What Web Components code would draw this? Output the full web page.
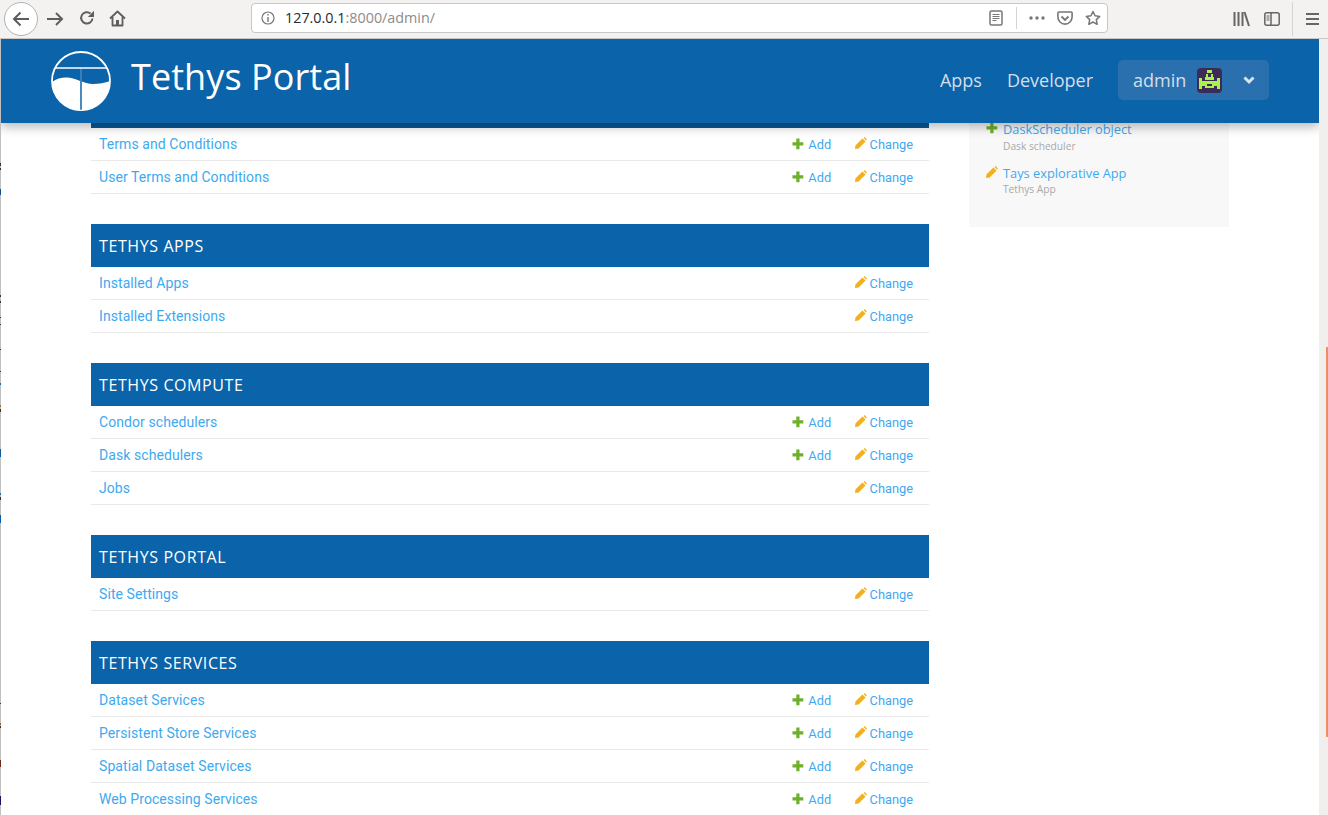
<!DOCTYPE html>
<html>
<head>
<meta charset="utf-8">
<title>Tethys Portal</title>
<style>
  html, body { margin: 0; height: 100%; background: #fff; overflow: hidden; }
  body { display: flex; flex-direction: column; width: 1328px; height: 815px; font-family: "Open Sans", sans-serif; }
</style>
</head>
<body>
<browser-bar></browser-bar>
<page-frame>
  <portal-header slot="header"></portal-header>
  <admin-section clipped>
    <admin-row add change>Terms and Conditions</admin-row>
    <admin-row add change>User Terms and Conditions</admin-row>
  </admin-section>
  <admin-section title="Tethys Apps">
    <admin-row change>Installed Apps</admin-row>
    <admin-row change>Installed Extensions</admin-row>
  </admin-section>
  <admin-section title="Tethys Compute">
    <admin-row add change>Condor schedulers</admin-row>
    <admin-row add change>Dask schedulers</admin-row>
    <admin-row change>Jobs</admin-row>
  </admin-section>
  <admin-section title="Tethys Portal">
    <admin-row change>Site Settings</admin-row>
  </admin-section>
  <admin-section title="Tethys Services">
    <admin-row add change>Dataset Services</admin-row>
    <admin-row add change>Persistent Store Services</admin-row>
    <admin-row add change>Spatial Dataset Services</admin-row>
    <admin-row add change>Web Processing Services</admin-row>
  </admin-section>
  <recent-actions slot="side">
    <recent-item kind="add" type="Dask scheduler">DaskScheduler object</recent-item>
    <recent-item kind="change" type="Tethys App">Tays explorative App</recent-item>
  </recent-actions>
</page-frame>

<script>
const ICONS = {
  plus: `<svg class="plus" width="12" height="12" viewBox="0 0 12 12"><path fill="#6fb02a" d="M4.300 .5h3.200v3.800h3.800v3.200H7.500v3.800H4.300V7.500H.5V4.300h3.800z"/></svg>`,
  pencil: `<svg class="pencil" width="12" height="12" viewBox="0 0 12 12"><path fill="#f2b01e" d="M9.600 0L12 2.400l-1 1-2.400-2.400zM7.400 1.400l3.200 3.200-7 7L0 12l.4-3.600z"/></svg>`
};

class BrowserBar extends HTMLElement {
  connectedCallback() {
    this.attachShadow({ mode: 'open' }).innerHTML = `
      <style>
        :host { display: flex; align-items: center; flex: none; height: 38px; background: #f3f2f0; border-bottom: 1px solid #c9c8c6; box-sizing: content-box; position: relative; }
        svg { display: block; flex: none; }
        .back { width: 32px; height: 32px; margin-left: 4px; border: 1px solid #b4b3b1; border-radius: 50%; background: #fff; display: flex; align-items: center; justify-content: center; }
        .url { margin-left: 125px; width: 855px; height: 28px; background: #fff; border: 1px solid #c8c7c5; border-radius: 4px; display: flex; align-items: center; position: relative; top: -1px; }
        .addr { margin-left: 10px; font: 14.350px/1 "Open Sans", sans-serif; color: #8c8c8c; flex: 1; }
        .addr b { font-weight: 400; color: #2a2a2a; }
        .sep { width: 1px; height: 22px; background: #d5d4d2; }
      </style>
      <div class="back"><svg width="20" height="18" viewBox="0 0 20 18"><path fill="none" stroke="#5c5c5c" stroke-width="2" d="M18 9H3M9.500 2.500L3 9l6.500 6.500"/></svg></div>
      <svg style="margin-left:8px;margin-top:-1px" width="18" height="16" viewBox="0 0 18 16"><path fill="none" stroke="#5e5e5e" stroke-width="2" d="M1 8h15M10 2l6 6-6 6"/></svg>
      <svg style="margin-left:15px;margin-top:-2px" width="16" height="16" viewBox="0 0 16 16"><path fill="none" stroke="#5e5e5e" stroke-width="2" d="M13.500 8.500A5.700 5.700 0 1 1 11.500 3.500"/><path fill="#5e5e5e" d="M15 .8v6.200H8.800z"/></svg>
      <svg style="margin-left:14px;margin-top:-2px" width="17" height="17" viewBox="0 0 17 17"><path fill="none" stroke="#5e5e5e" stroke-width="1.800" stroke-linejoin="round" d="M1 8.500L8.500 1.500 16 8.500M3.500 7v8.500h10V7"/><path fill="#5e5e5e" d="M7 10h3v5.500H7z"/></svg>
      <div class="url">
        <svg style="margin-left:9px" width="14" height="14" viewBox="0 0 14 14"><circle cx="7" cy="7" r="6" fill="none" stroke="#777" stroke-width="1.200"/><path fill="#777" d="M6.300 3h1.400v1.400H6.300zM6.300 6h1.400v5H6.300z"/></svg>
        <div class="addr"><b>127.0.0.1</b>:8000/admin/</div>
        <svg width="14" height="16" viewBox="0 0 14 16"><rect x="1" y="1" width="12" height="14" rx="1.500" fill="none" stroke="#777" stroke-width="1.500"/><path stroke="#777" stroke-width="1" d="M3.500 4.500h7M3.500 6.500h7M3.500 8.500h7M3.500 10.500h4"/></svg>
        <div class="sep" style="margin-left:13px"></div>
        <svg style="margin-left:12px" width="16" height="4" viewBox="0 0 16 4"><circle cx="2" cy="2" r="1.700" fill="#777"/><circle cx="8" cy="2" r="1.700" fill="#777"/><circle cx="14" cy="2" r="1.700" fill="#777"/></svg>
        <svg style="margin-left:12px" width="16" height="15" viewBox="0 0 16 15"><path fill="none" stroke="#777" stroke-width="1.600" d="M1.800 1h12.400c.5 0 .9.400.9.900V6A7 7 0 0 1 .9 6V1.900c0-.5.400-.9.900-.9z"/><path fill="none" stroke="#777" stroke-width="1.800" d="M4.500 5.500L8 9l3.500-3.500"/></svg>
        <svg style="margin:0 6px 0 12px" width="16" height="16" viewBox="0 0 16 16"><path fill="none" stroke="#777" stroke-width="1.500" stroke-linejoin="round" d="M8 1.500l2 4.300 4.700.6-3.400 3.200.9 4.700L8 12l-4.200 2.300.9-4.700L1.300 6.400 6 5.800z"/></svg>
      </div>
      <svg style="margin-left:125px" width="17" height="16" viewBox="0 0 17 16"><path stroke="#666" stroke-width="2" fill="none" d="M1.500 1v14M5.500 1v14M9.500 1v14M11.500 1l4.500 14"/></svg>
      <svg style="margin-left:14px" width="16" height="14" viewBox="0 0 16 14"><rect x=".8" y=".8" width="14.400" height="12.400" rx="2" fill="none" stroke="#666" stroke-width="1.500"/><path fill="none" stroke="#666" stroke-width="1.500" d="M7 1v12"/><path stroke="#666" d="M2.500 4h3M2.500 6h3M2.500 8h3"/></svg>
      <div class="sep" style="margin-left:12px;height:34px"></div>
      <svg style="margin-left:13px" width="13" height="12" viewBox="0 0 13 12"><path stroke="#666" stroke-width="2" d="M0 1h13M0 6h13M0 11h13"/></svg>
    `;
  }
}

// bits of the desktop that show through the 1px gap left of the window (page y, colour)
const EDGE_MARKS = [[163,166,'#333'],[168,170,'#333'],[189,195,'#12518c'],[295,297,'#333'],[301,303,'#333'],[317,318,'#333'],
  [324,325,'#333'],[349,350,'#333'],[371,372,'#333'],[383,385,'#1a6fb0'],[405,407,'#a5702a'],[409,412,'#333'],[449,457,'#0b5aa5'],
  [493,495,'#1a6fb0'],[497,500,'#333'],[515,523,'#0b5aa5'],[703,704,'#333'],[723,725,'#a5602a'],[726,728,'#333'],[760,767,'#6b2a1a'],[796,805,'#1a1060']];

class PageFrame extends HTMLElement {
  connectedCallback() {
    let y = 0;
    const stops = [];
    for (const [a, b, c] of EDGE_MARKS) {
      const top = a - 39, bot = b - 39;
      stops.push(`#c0c0c0 ${y}px ${top}px`, `${c} ${top}px ${bot}px`);
      y = bot;
    }
    stops.push(`#c0c0c0 ${y}px`);
    this.attachShadow({ mode: 'open' }).innerHTML = `
      <style>
        :host { display: flex; flex: 1; min-height: 0; }
        .edge { flex: none; width: 1px; background: linear-gradient(${stops.join(',')}); }
        .view { flex: none; width: 1318px; display: flex; flex-direction: column; overflow: hidden; }
        .body { display: flex; gap: 40px; padding-left: 90px; }
        .main { flex: none; width: 838px; }
        .side { flex: none; width: 260px; }
        .bar { flex: none; width: 9px; background: #f0efee; display: flex; justify-content: flex-end; }
        .thumb { width: 2px; height: 390px; margin-top: 308px; background: #f08c62; }
      </style>
      <div class="edge"></div>
      <div class="view">
        <slot name="header"></slot>
        <div class="body">
          <div class="main"><slot></slot></div>
          <div class="side"><slot name="side"></slot></div>
        </div>
      </div>
      <div class="bar"><div class="thumb"></div></div>
    `;
  }
}

class PortalHeader extends HTMLElement {
  connectedCallback() {
    // invader avatar, x y w h on a 25px box
    const px = [[10,2,5,3],[9,6,2,3],[14,6,2,3],[8,9,9,3],[2,10,3,11],[20,10,3,11],[5,13,15,3],[5,16,5,2],[15,16,5,2],[8,18,9,2]]
      .map(([x, y, w, h]) => `<rect x="${x}" y="${y}" width="${w}" height="${h}"/>`).join('');
    this.attachShadow({ mode: 'open' }).innerHTML = `
      <style>
        :host { display: flex; align-items: center; flex: none; height: 84px; background: #0b63a9; padding: 0 50px; position: relative; z-index: 2; box-shadow: 0 4px 10px rgba(0,0,0,.28); }
        .brand { display: flex; align-items: center; gap: 20px; flex: 1; }
        svg { display: block; }
        .title { font-size: 36px; line-height: 1; color: #fff; margin-top: -8px; letter-spacing: .08px; }
        .nav { font-size: 18px; color: #d4dfe9; margin-top: -2px; }
        .nav + .nav { margin-left: 25px; }
        .user { display: flex; align-items: center; width: 151px; height: 40px; margin: -2px 0 0 25px; box-sizing: border-box; padding-left: 15px; background: #2a70ae; border-radius: 5px; color: #d4dfe9; font-size: 18px; }
        .user svg.av { margin-left: 11px; border-radius: 4px; }
        .user svg.ch { margin-left: 21px; }
      </style>
      <div class="brand">
        <svg width="60" height="60" viewBox="0 0 60 60">
          <circle cx="30" cy="30" r="29" fill="none" stroke="#fff" stroke-width="1.800"/>
          <path fill="#fff" d="M1 31C6 27 12 26 17 26.500C25 27 33 33 42 33C48 33 54 32 59 30A29 29 0 0 1 1 31z"/>
          <path stroke="#fff" stroke-width="1.500" d="M4 17h52M30 17v14"/>
          <path stroke="#0b63a9" stroke-width="1.500" d="M30 17.800v41"/>
        </svg>
        <div class="title">Tethys Portal</div>
      </div>
      <div class="nav">Apps</div>
      <div class="nav">Developer</div>
      <div class="user">admin
        <svg class="av" width="25" height="25" viewBox="0 0 25 25" shape-rendering="crispEdges"><rect width="25" height="25" fill="#3c2a58"/><g fill="#a8f24a">${px}</g></svg>
        <svg class="ch" width="12" height="9" viewBox="0 0 12 9"><path fill="none" stroke="#d8e4ee" stroke-width="3" d="M1.500 1.500L6 6l4.500-4.500"/></svg>
      </div>
    `;
  }
}

class AdminSection extends HTMLElement {
  connectedCallback() {
    const clipped = this.hasAttribute('clipped');
    this.attachShadow({ mode: 'open' }).innerHTML = `
      <style>
        :host { display: block; margin-bottom: 30px; }
        .cap { height: 43px; box-sizing: border-box; padding-left: 8px; background: #0b63a9; color: #fff; font-size: 16px; line-height: 44px; letter-spacing: .6px; text-transform: uppercase; }
        .stub { height: 5px; background: #0a5a98; }
      </style>
      ${clipped ? '<div class="stub"></div>' : `<div class="cap">${this.getAttribute('title')}</div>`}
      <slot></slot>
    `;
  }
}

class AdminRow extends HTMLElement {
  connectedCallback() {
    const add = this.hasAttribute('add');
    const change = this.hasAttribute('change');
    this.attachShadow({ mode: 'open' }).innerHTML = `
      <style>
        :host { display: flex; align-items: center; height: 33px; box-sizing: border-box; border-bottom: 1px solid #eaeaea; padding: 0 16px 0 8px; font: 14px/1 Roboto, sans-serif; color: #3ea9f0; }
        .name { flex: 1; letter-spacing: .08px; }
        .act { display: flex; align-items: center; gap: 3px; padding-top: 2px; font: 12.800px/1 Roboto, sans-serif; }
        .act svg { display: block; margin-top: -3px; }
        .add { gap: 4px; margin-right: 23.500px; }
        .add svg { margin-top: -1px; }
      </style>
      <div class="name"><slot></slot></div>
      ${add ? `<div class="act add">${ICONS.plus}<span>Add</span></div>` : ''}
      ${change ? `<div class="act">${ICONS.pencil}<span>Change</span></div>` : ''}
    `;
  }
}

class RecentActions extends HTMLElement {
  connectedCallback() {
    this.attachShadow({ mode: 'open' }).innerHTML = `
      <style>
        :host { display: block; height: 104px; box-sizing: border-box; background: #f8f8f8; padding-left: 17px; }
      </style>
      <slot></slot>
    `;
  }
}

class RecentItem extends HTMLElement {
  connectedCallback() {
    const icon = this.getAttribute('kind') === 'add' ? ICONS.plus : ICONS.pencil;
    this.attachShadow({ mode: 'open' }).innerHTML = `
      <style>
        :host { display: flex; gap: 5px; height: 44px; color: #3ea9f0; font: 12.800px/1 "Open Sans", sans-serif; }
        svg { display: block; margin-top: -1px; flex: none; }
        .type { margin-top: 5px; font-size: 10.200px; color: #a8a8a8; }
        :host([kind=change]) .type { margin-top: 4px; }
      </style>
      ${icon}
      <div><slot></slot><div class="type">${this.getAttribute('type')}</div></div>
    `;
  }
}

customElements.define('browser-bar', BrowserBar);
customElements.define('page-frame', PageFrame);
customElements.define('portal-header', PortalHeader);
customElements.define('admin-section', AdminSection);
customElements.define('admin-row', AdminRow);
customElements.define('recent-actions', RecentActions);
customElements.define('recent-item', RecentItem);
</script>
</body>
</html>
